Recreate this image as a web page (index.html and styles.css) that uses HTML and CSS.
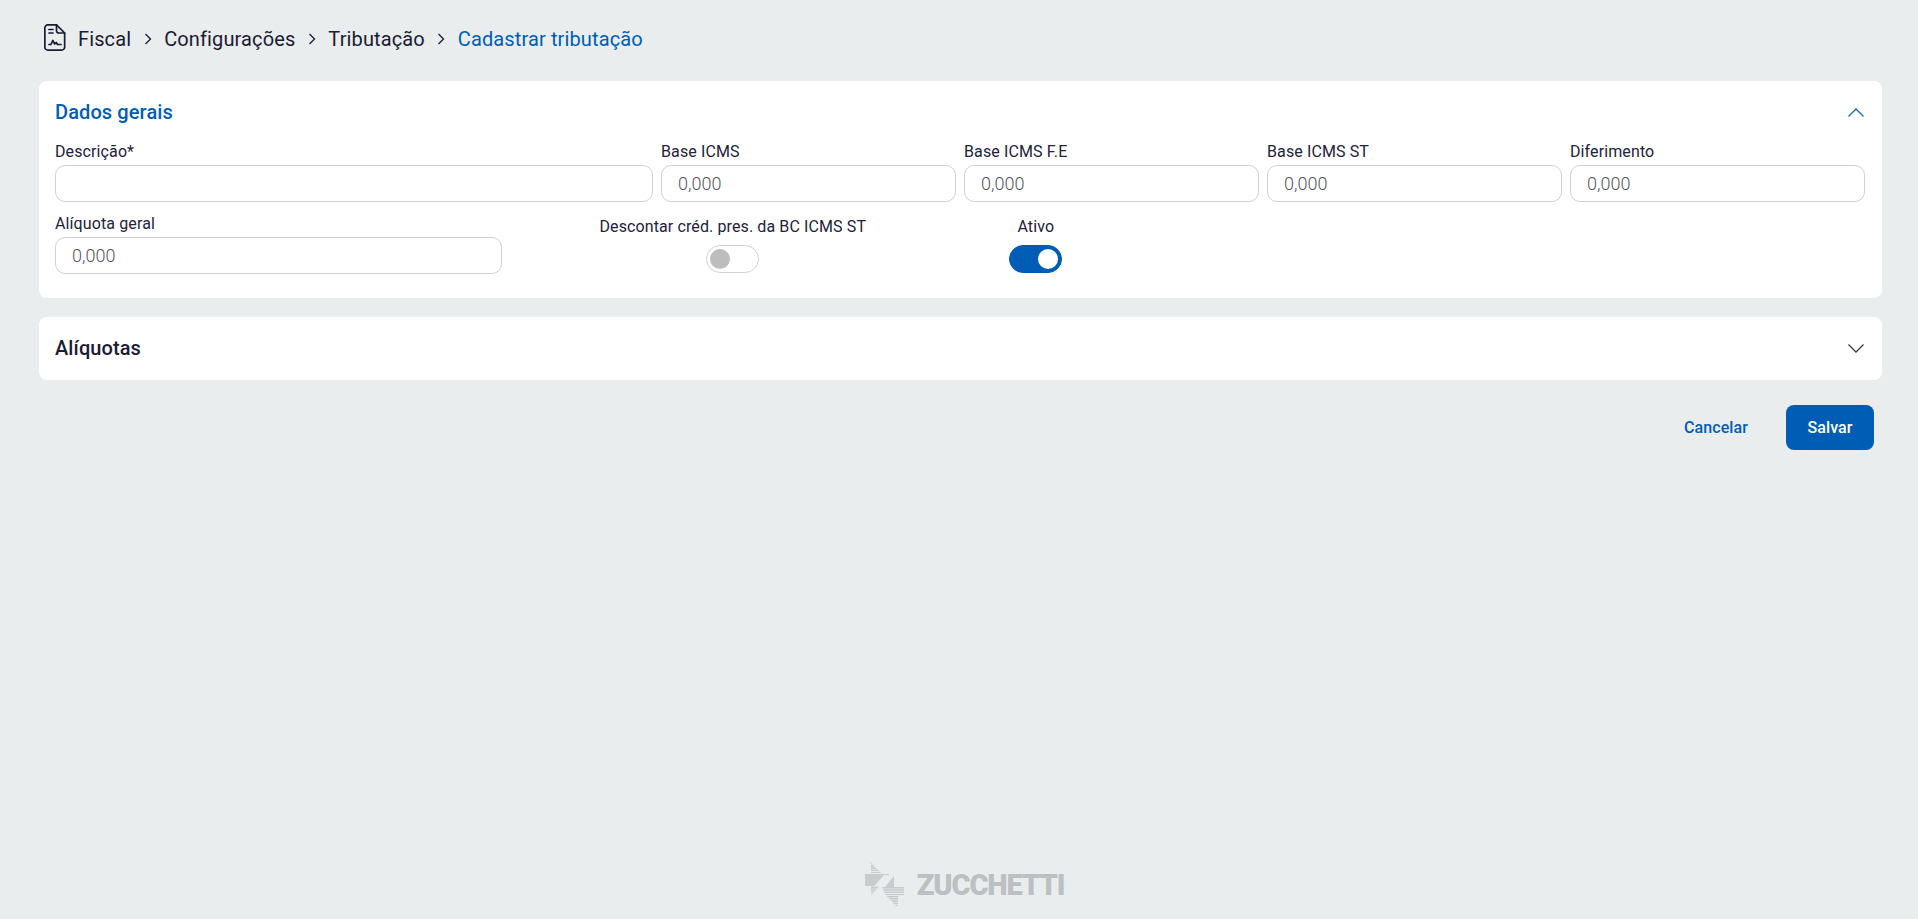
FILE: index.html
```html
<!DOCTYPE html>
<html lang="pt-BR">
<head>
<meta charset="utf-8">
<title>Cadastrar tributação</title>
<link rel="stylesheet" href="styles.css">
</head>
<body>
<div class="page">
  <nav class="crumbs">
    <svg class="crumb-icon" width="24" height="28" viewBox="0 0 24 28" fill="none" stroke="#1b1b33" stroke-width="1.7" stroke-linecap="round" stroke-linejoin="round">
      <path d="M13.500.850H4.850a3 3 0 0 0-3 3v19.300a3 3 0 0 0 3 3h13.800a3 3 0 0 0 3-3V9z"/>
      <path d="M13.500.850v5.650a2.500 2.500 0 0 0 2.500 2.500h5.650"/>
      <path d="M6 5.500h4M6 9h4"/>
      <path d="M6 20.500h2l1.800-4 2 3.500 1.500-1.500 1.200 2H18"/>
    </svg>
    <span class="crumb">Fiscal</span>
    <svg class="sep" width="8" height="12" viewBox="0 0 8 12" fill="none" stroke="#1b1b33" stroke-width="1.3"><path d="M1.500 1l5 5-5 5"/></svg>
    <span class="crumb">Configurações</span>
    <svg class="sep" width="8" height="12" viewBox="0 0 8 12" fill="none" stroke="#1b1b33" stroke-width="1.3"><path d="M1.500 1l5 5-5 5"/></svg>
    <span class="crumb">Tributação</span>
    <svg class="sep" width="8" height="12" viewBox="0 0 8 12" fill="none" stroke="#1b1b33" stroke-width="1.3"><path d="M1.500 1l5 5-5 5"/></svg>
    <span class="crumb current">Cadastrar tributação</span>
  </nav>

  <section class="card open">
    <header class="card-head">
      <h2 class="card-title active">Dados gerais</h2>
      <svg class="chev" width="16" height="9" viewBox="0 0 16 9" fill="none" stroke="#1b6bbd" stroke-width="1.300"><path d="M.500 8.500L8 1l7.500 7.500"/></svg>
    </header>
    <div class="grid">
      <div class="field span4"><label class="label">Descrição*</label><div class="input"></div></div>
      <div class="field span2"><label class="label">Base ICMS</label><div class="input">0,000</div></div>
      <div class="field span2"><label class="label">Base ICMS F.E</label><div class="input">0,000</div></div>
      <div class="field span2"><label class="label">Base ICMS ST</label><div class="input">0,000</div></div>
      <div class="field span2"><label class="label">Diferimento</label><div class="input">0,000</div></div>
      <div class="field span3"><label class="label">Alíquota geral</label><div class="input">0,000</div></div>
      <div class="toggle-field span3"><span class="label">Descontar créd. pres. da BC ICMS ST</span><span class="toggle"><span class="knob"></span></span></div>
      <div class="toggle-field span1"><span class="label">Ativo</span><span class="toggle on"><span class="knob"></span></span></div>
    </div>
  </section>

  <section class="card closed">
    <header class="card-head">
      <h2 class="card-title">Alíquotas</h2>
      <svg class="chev" width="16" height="9" viewBox="0 0 16 9" fill="none" stroke="#3a3a50" stroke-width="1.300"><path d="M.500.500L8 8l7.500-7.500"/></svg>
    </header>
  </section>

  <div class="actions">
    <button class="btn-link">Cancelar</button>
    <button class="btn-primary">Salvar</button>
  </div>

  <footer class="footer">
    <svg class="logo-mark" width="40" height="44" viewBox="0 0 40 44">
      <defs>
        <pattern id="stripes" width="4" height="2.200" patternUnits="userSpaceOnUse">
          <rect width="4" height="1.300" fill="#c3c7c9"/>
        </pattern>
      </defs>
      <path d="M6 0L17 11H6z" fill="url(#stripes)"/>
      <path d="M6 23H14L6 33z" fill="url(#stripes)"/>
      <path d="M0 11H20L9 23H0z" fill="#c8cccd"/>
      <path d="M20 11H24V12H20z" fill="#c8cccd"/>
      <path d="M29 13V24H20z" fill="#c8cccd"/>
      <path d="M17 24H39V33H33V43H31L20 31z" fill="url(#stripes)"/>
    </svg>
    <span class="logo-text">ZUCCHETTI</span>
  </footer>
</div>
</body>
</html>
```
FILE: styles.css
```css
* { box-sizing: border-box; }
html, body { margin: 0; height: 100%; overflow: hidden; }
body { background: #e9edee; font-family: Roboto, "Liberation Sans", sans-serif; color: #1b1b33; }
.page { height: 100vh; padding: 24px 36px 0 39px; display: flex; flex-direction: column; overflow: hidden; }
.crumbs { display: flex; align-items: center; height: 30px; font-size: 20px; letter-spacing: .12px; margin-bottom: 27px; }
.crumb-icon { margin: 0 11px 2px 4px; flex: none; }
.sep { margin: 0 12.500px; flex: none; }
.current { color: #005db5; }
.card { background: #fff; border-radius: 8px; width: 1843px; padding: 0 16px; }
.open { height: 217px; margin-bottom: 19px; }
.closed { height: 63px; margin-bottom: 25px; }
.card-head { display: flex; align-items: center; justify-content: space-between; height: 63px; padding-right: 2px; }
.card-title { margin: 0 0 2px; font-size: 20px; font-weight: 500; letter-spacing: .1px; }
.card-title.active { color: #005db5; }
.grid { display: grid; grid-template-columns: repeat(12, 1fr); column-gap: 8px; row-gap: 12px; width: 1818px; margin-top: -2px; padding-right: 8px; }
.span1 { grid-column: span 1; }
.span2 { grid-column: span 2; }
.span3 { grid-column: span 3; }
.span4 { grid-column: span 4; }
.field { display: flex; flex-direction: column; }
.label { font-size: 16px; line-height: 19px; color: #22223a; letter-spacing: .11px; }
.field .label { margin-bottom: 4px; }
.input { height: 37px; border: 1px solid #cdd2dc; border-radius: 10px; background: #fff; font-size: 18px; font-weight: 300; color: #55555f; line-height: 35px; padding-left: 16px; }
.toggle-field { display: flex; flex-direction: column; align-items: center; padding-top: 3px; }
.toggle { display: block; width: 53px; height: 28px; border-radius: 14px; border: 1px solid #cdd2dc; background: #fff; margin-top: 9px; position: relative; }
.knob { position: absolute; left: 3px; top: 3px; width: 20px; height: 20px; border-radius: 50%; background: #bdbdbd; }
.toggle.on { background: #005db5; border-color: #005db5; }
.toggle.on .knob { left: auto; right: 3px; background: #fff; }
.actions { display: flex; justify-content: flex-end; align-items: center; width: 1835px; gap: 20px; }
.btn-link { border: 0; background: none; font: 500 16px Roboto, sans-serif; letter-spacing: .1px; color: #005db5; padding: 0 18px; height: 45px; }
.btn-primary { border: 0; width: 88px; height: 45px; border-radius: 8px; background: #005db5; color: #fff; font: 500 16px Roboto, sans-serif; letter-spacing: .1px; }
.footer { margin-top: auto; display: flex; align-items: center; justify-content: center; gap: 12px; height: 60px; margin-bottom: 4px; padding-left: 8px; }
.logo-text { font-weight: 900; font-size: 29px; letter-spacing: -1.100px; color: #bcc0c2; }
```
